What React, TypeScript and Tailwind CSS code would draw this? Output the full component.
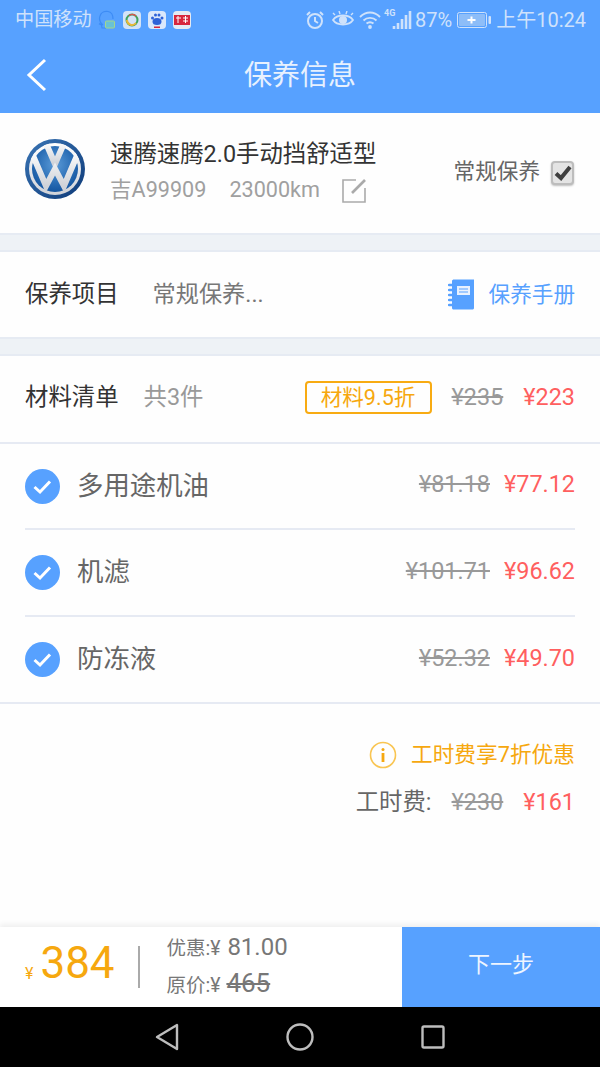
import React from "react";

const Row = ({ name, oldP, newP, h, border }: { name: string; oldP: string; newP: string; h: string; border: boolean }) => (
  <div className="px-[25px]">
    <div className={`${h} flex items-center ${border ? "border-b-2 border-[#e6eaf3]" : ""}`}>
      <svg width="35" height="35" viewBox="0 0 35 35" className="shrink-0">
        <circle cx="17.5" cy="17.5" r="17.5" fill="#57a1ff" />
        <path d="M9.5 18 L15 23 L25 12.5" fill="none" stroke="#fff" strokeWidth="3" />
      </svg>
      <span className="ml-[17px] text-[26.4px] text-[#666] leading-none">{name}</span>
      <span className="ml-auto text-[23.4px] leading-none text-[#999] line-through relative top-[-1px]">{oldP}</span>
      <span className="ml-[14px] text-[23.4px] leading-none text-[#ff5f5f] relative top-[-1px]">{newP}</span>
    </div>
  </div>
);

const VW = () => (
  <svg width="60" height="60" viewBox="0 0 60 60" className="shrink-0">
    <defs>
      <radialGradient id="vwb" cx="50%" cy="40%" r="65%">
        <stop offset="0%" stopColor="#5b9bd8" />
        <stop offset="60%" stopColor="#2a6db5" />
        <stop offset="100%" stopColor="#0f4f9a" />
      </radialGradient>
      <linearGradient id="vwr" x1="0" y1="0" x2="1" y2="1">
        <stop offset="0%" stopColor="#3a75b5" />
        <stop offset="100%" stopColor="#0e3a78" />
      </linearGradient>
      <linearGradient id="vww" x1="0" y1="0" x2="0" y2="1">
        <stop offset="0%" stopColor="#ffffff" />
        <stop offset="100%" stopColor="#cfd2d8" />
      </linearGradient>
      <clipPath id="vwc">
        <circle cx="30" cy="30" r="26" />
      </clipPath>
    </defs>
    <circle cx="30" cy="30" r="30" fill="url(#vwr)" />
    <circle cx="30" cy="30" r="26" fill="url(#vww)" />
    <circle cx="30" cy="30" r="23" fill="url(#vwb)" />
    <g clipPath="url(#vwc)" fill="none" stroke="url(#vww)" strokeWidth="6" strokeLinejoin="miter">
      <path d="M20 2 L30 25 L40 2" />
      <path d="M6 12 L21 47 L30 30 L39 47 L54 12" />
    </g>
  </svg>
);

export default function App() {
  return (
    <div className="w-[600px] h-[1067px] flex flex-col bg-[#fefefe] overflow-hidden" style={{ fontFamily: 'Roboto, "Noto Sans CJK SC", sans-serif' }}>
      <div className="h-[113px] bg-[#57a1ff] shrink-0 flex flex-col">
        <div className="h-[40px] flex items-center pl-[15px] pr-[14px] text-[#cfe2fb]">
          <span className="text-[19.2px] leading-none">中国移动</span>
          <svg width="18" height="20" viewBox="0 0 18 20" className="ml-[6px]">
            <path d="M5 15 C1 12 1 9 2 6 C3 2 7 1 10 1.5 C13 2 15 5 15 9 M3 12 L1.5 14 L3.5 15 L4 18 L8 18" fill="none" stroke="#3d8cf5" strokeWidth="1.2" />
            <rect x="7.5" y="11" width="9" height="7" rx="1" fill="#69c2d6" stroke="#a5d88a" />
          </svg>
          <svg width="18" height="18" viewBox="0 0 18 18" className="ml-[7px]">
            <rect width="18" height="18" rx="4" fill="#d4e3f7" />
            <circle cx="9" cy="9" r="5.5" fill="none" stroke="#3fa35c" strokeWidth="2" />
            <path d="M4 9 A5 5 0 0 0 13 12" fill="none" stroke="#e9b83a" strokeWidth="2" />
            <path d="M13 5 A5 5 0 0 0 6 4.8" fill="none" stroke="#d9534f" strokeWidth="1.5" />
          </svg>
          <svg width="18" height="18" viewBox="0 0 18 18" className="ml-[7px]">
            <rect width="18" height="18" rx="4" fill="#dbe8fb" />
            <ellipse cx="9" cy="10.5" rx="4.5" ry="3.6" fill="#2f62d8" />
            <circle cx="4.5" cy="7" r="1.5" fill="#2f62d8" />
            <circle cx="7.5" cy="4" r="1.5" fill="#2f62d8" />
            <circle cx="11" cy="4" r="1.5" fill="#2f62d8" />
            <circle cx="14" cy="7" r="1.5" fill="#2f62d8" />
            <rect x="6" y="15.5" width="6" height="1.5" fill="#d7263d" />
          </svg>
          <svg width="18" height="18" viewBox="0 0 18 18" className="ml-[7px]">
            <rect width="18" height="18" rx="4" fill="#e4eaf3" />
            <rect x="1" y="4" width="16" height="10" fill="#d7263d" />
            <path d="M3 7 H8 M5 5 V12 M10 7 H15 M12.5 5 V12 M10 10 H15" stroke="#fff" strokeWidth="1" />
          </svg>
          <div className="ml-auto flex items-center">
            <svg width="20" height="20" viewBox="0 0 20 20">
              <circle cx="10" cy="11" r="7" fill="none" stroke="#cfe2fb" strokeWidth="2" />
              <path d="M10 7 V11 L13 13 M2 5 L5 2 M18 5 L15 2" fill="none" stroke="#cfe2fb" strokeWidth="2" />
            </svg>
            <svg width="22" height="18" viewBox="0 0 22 18" className="ml-[7px]">
              <path d="M1 9 C5 3 17 3 21 9 C17 15 5 15 1 9 Z" fill="none" stroke="#cfe2fb" strokeWidth="1.8" />
              <circle cx="11" cy="9" r="4" fill="#cfe2fb" />
              <path d="M3 4 L1 2 M8 3 L7 0 M14 3 L15 0 M19 4 L21 2" stroke="#cfe2fb" strokeWidth="1.4" />
            </svg>
            <svg width="22" height="18" viewBox="0 0 22 18" className="ml-[5px]">
              <path d="M1 6 C7 0 15 0 21 6 M4.5 9.5 C8 6 14 6 17.5 9.5 M7.5 12.5 C9.5 11 12.5 11 14.5 12.5" fill="none" stroke="#cfe2fb" strokeWidth="1.9" />
              <circle cx="11" cy="16" r="1.9" fill="#cfe2fb" />
            </svg>
            <div className="ml-[3px] w-[29px] h-[20px] relative">
              <span className="absolute left-0 top-[-1px] text-[9px] font-bold leading-none">4G</span>
              <svg width="29" height="20" viewBox="0 0 29 20">
                <path d="M10 16 V19 M14 13 V19 M18 9 V19 M22 5 V19 M26 1 V19" stroke="#cfe2fb" strokeWidth="2.6" />
              </svg>
            </div>
            <span className="ml-[2px] text-[20px] leading-none">87%</span>
            <svg width="35" height="16" viewBox="0 0 35 16" className="ml-[5px]">
              <rect x="0.5" y="0.5" width="29" height="15" rx="2" fill="none" stroke="#cfe2fb" />
              <rect x="2" y="2" width="26" height="12" rx="1" fill="#8dbdf8" />
              <path d="M10.5 8 H18.5 M14.5 4.5 V11.5" stroke="#fff" strokeWidth="2" />
              <rect x="31.5" y="4" width="2.5" height="8" rx="1" fill="#cfe2fb" />
            </svg>
            <span className="ml-[4px] text-[20px] leading-none">上午10:24</span>
          </div>
        </div>
        <div className="flex-1 relative flex items-center justify-center pb-[1px]">
          <svg width="24" height="36" viewBox="0 0 24 36" className="absolute left-[25px] top-[17px]">
            <path d="M20 3 L4 18 L20 33" fill="none" stroke="#fff" strokeWidth="3" />
          </svg>
          <span className="text-[28px] leading-none text-[#e8f1fe]">保养信息</span>
        </div>
      </div>

      <div className="h-[120px] shrink-0 flex items-center pl-[25px] pr-[26px]">
        <div className="mt-[-8px]">
          <VW />
        </div>
        <div className="ml-[25px] flex flex-col">
          <span className="text-[23.4px] leading-none text-[#333]">速腾速腾2.0手动挡舒适型</span>
          <div className="mt-[11px] flex items-center text-[21.6px] leading-none text-[#a0a0a0]">
            <span>吉A99909</span>
            <span className="ml-[23px]">23000km</span>
            <svg width="26" height="25" viewBox="0 0 26 25" className="ml-[21px] mt-[1px]">
              <path d="M15 2 H2 V24 H24 V10" fill="none" stroke="#aaa" strokeWidth="1.6" />
              <path d="M11 15 L24 2" stroke="#aaa" strokeWidth="2.6" />
            </svg>
          </div>
        </div>
        <span className="ml-auto text-[21.6px] leading-none text-[#666] relative top-[-1px]">常规保养</span>
        <div className="ml-[11px] w-[23px] h-[24px] rounded-[4px] bg-[#e4e4e4] border-2 border-[#bdbdbd] shadow-[0_1px_2px_rgba(0,0,0,0.25)] flex items-center justify-center">
          <svg width="18" height="16" viewBox="0 0 18 16">
            <path d="M2 8.5 L7 13 L16 2" fill="none" stroke="#3f3f3f" strokeWidth="4" />
          </svg>
        </div>
      </div>

      <div className="h-[19px] shrink-0 bg-[#eef2f6] border-y-2 border-[#e6ebf3]" />

      <div className="h-[85px] shrink-0 flex items-center px-[25px]">
        <span className="text-[23.4px] leading-none text-[#333]">保养项目</span>
        <span className="ml-[34px] text-[23.2px] leading-none text-[#777]">常规保养...</span>
        <svg width="28" height="31" viewBox="0 0 28 31" className="ml-auto">
          <path d="M4 2 C4 1 5 0.5 6 0.5 H26 V29 C26 30 25 30.5 24 30.5 H6 C5 30.5 4 30 4 29 Z" fill="#57a1ff" />
          <path d="M1 6 H5 M1 11 H5 M1 16 H5 M1 21 H5 M1 26 H5" stroke="#57a1ff" strokeWidth="2.4" strokeLinecap="round" />
          <rect x="9" y="7" width="13" height="9" fill="#e8f1fe" />
          <path d="M11 10 H20 M11 13 H20" stroke="#57a1ff" strokeWidth="1.2" />
        </svg>
        <span className="ml-[13px] text-[21.6px] leading-none text-[#57a1ff]">保养手册</span>
      </div>

      <div className="h-[19px] shrink-0 bg-[#eef2f6] border-y-2 border-[#e6ebf3]" />

      <div className="h-[88px] shrink-0 flex items-center px-[25px] border-b-2 border-[#e6eaf3] pb-[3px]">
        <span className="text-[23.4px] leading-none text-[#333]">材料清单</span>
        <span className="ml-[25px] text-[23.4px] leading-none text-[#999]">共3件</span>
        <span className="ml-auto w-[127px] h-[33px] rounded-[4px] border-2 border-[#f8ab12] flex items-center justify-center text-[21.6px] leading-none text-[#f6a80f]">材料9.5折</span>
        <span className="ml-[20px] text-[23.4px] leading-none text-[#999] line-through">¥235</span>
        <span className="ml-[20px] text-[23.4px] leading-none text-[#ff5f5f]">¥223</span>
      </div>

      <Row name="多用途机油" oldP="¥81.18" newP="¥77.12" h="h-[86px]" border />
      <Row name="机滤" oldP="¥101.71" newP="¥96.62" h="h-[87px]" border />
      <div className="border-b-2 border-[#e6eaf3]">
        <Row name="防冻液" oldP="¥52.32" newP="¥49.70" h="h-[85px]" border={false} />
      </div>

      <div className="flex-1 flex flex-col items-end px-[25px] pt-[37px]">
        <div className="flex items-center">
          <svg width="28" height="28" viewBox="0 0 28 28">
            <circle cx="14" cy="14" r="12.5" fill="none" stroke="#f9c552" strokeWidth="1.6" />
            <circle cx="14" cy="8.5" r="1.5" fill="#f6a80f" />
            <rect x="12.6" y="12" width="2.8" height="9" fill="#f6a80f" />
          </svg>
          <span className="ml-[14px] text-[21.7px] leading-none text-[#f6a80f]">工时费享7折优惠</span>
        </div>
        <div className="flex items-center mt-[22px]">
          <span className="text-[23.4px] leading-none text-[#666]">工时费:</span>
          <span className="ml-[20px] text-[23.4px] leading-none text-[#999] line-through">¥230</span>
          <span className="ml-[20px] text-[23.4px] leading-none text-[#ff5f5f]">¥161</span>
        </div>
      </div>

      <div className="h-[80px] shrink-0 flex bg-white shadow-[0_-3px_5px_rgba(0,0,0,0.06)]">
        <div className="flex-1 flex items-center pl-[25px]">
          <span className="text-[16px] leading-none text-[#f6a80f] mt-[14px]">¥</span>
          <span className="ml-[7px] text-[44px] leading-none text-[#f6a80f] w-[73px] relative top-[-4px]">384</span>
          <div className="ml-[25px] w-[2px] h-[42px] bg-[#aaa]" />
          <div className="ml-[26px] flex flex-col text-[#777] relative top-[-2px]">
            <div className="flex items-baseline h-[35px] pt-[5px]">
              <span className="text-[19.5px] leading-none">优惠:¥</span>
              <span className="ml-[7px] text-[24px] leading-none">81.00</span>
            </div>
            <div className="flex items-baseline h-[35px] pt-[5px]">
              <span className="text-[19.5px] leading-none">原价:¥</span>
              <span className="ml-[6px] text-[26px] leading-none line-through">465</span>
            </div>
          </div>
        </div>
        <div className="w-[198px] bg-[#57a1ff] flex items-center justify-center pb-[5px] text-[22px] leading-none text-[#eef5ff]">下一步</div>
      </div>

      <div className="h-[60px] shrink-0 bg-black flex items-center justify-center">
        <svg width="24" height="28" viewBox="0 0 24 28">
          <path d="M22 2 V26 L2 14 Z" fill="none" stroke="#bdbdbd" strokeWidth="2.4" strokeLinejoin="round" />
        </svg>
        <svg width="28" height="28" viewBox="0 0 28 28" className="ml-[107px]">
          <circle cx="14" cy="14" r="12.5" fill="none" stroke="#bdbdbd" strokeWidth="2.4" />
        </svg>
        <svg width="24" height="24" viewBox="0 0 24 24" className="ml-[107px]">
          <rect x="1.5" y="1.5" width="21" height="21" rx="1.5" fill="none" stroke="#bdbdbd" strokeWidth="2.4" />
        </svg>
      </div>
    </div>
  );
}
